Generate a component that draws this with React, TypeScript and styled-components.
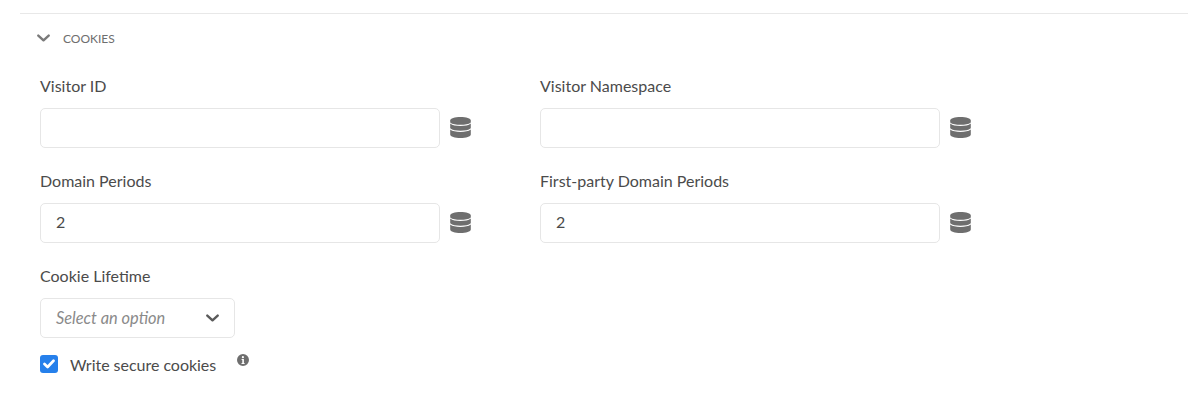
import React from 'react';
import styled, { createGlobalStyle } from 'styled-components';

const GlobalStyle = createGlobalStyle`
  html, body {
    margin: 0;
    padding: 0;
    background: #fff;
    font-family: Lato, "Open Sans", sans-serif;
  }
`;

const Page = styled.div`
  width: 1188px;
  height: 400px;
  padding: 13px 0 0 20px;
  box-sizing: border-box;
  overflow: hidden;
`;

const Section = styled.section`
  border-top: 1px solid #e8e8e8;
`;

const SectionHeader = styled.div`
  display: flex;
  align-items: center;
  height: 48px;
  padding-left: 17px;
  gap: 13px;
  color: #6e6e6e;
  font-size: 12px;
  text-transform: uppercase;
`;

const Body = styled.div`
  padding: 14px 0 0 20px;
  display: flex;
  flex-direction: column;
  gap: 23px;
`;

const Grid = styled.div`
  display: grid;
  grid-template-columns: 500px 500px;
  row-gap: 23px;
`;

const Field = styled.div`
  display: flex;
  flex-direction: column;
`;

const Label = styled.label`
  height: 32px;
  line-height: 20px;
  font-size: 16px;
  color: #4b4b4b;
`;

const InputRow = styled.div`
  display: flex;
  align-items: center;
  gap: 10px;
`;

const Input = styled.input`
  width: 400px;
  height: 40px;
  box-sizing: border-box;
  padding: 0 15px 3px;
  border: 1px solid #e6e6e6;
  border-radius: 5px;
  background: #fff;
  font: 16px Lato, "Open Sans", sans-serif;
  color: #4b4b4b;
  outline: none;
`;

const DataIcon = styled.svg`
  width: 21px;
  height: 21px;
  flex: none;
  margin-top: -1px;
  fill: #6e6e6e;
`;

const SelectBox = styled.div`
  display: flex;
  align-items: center;
  justify-content: space-between;
  width: 195px;
  height: 40px;
  box-sizing: border-box;
  padding: 0 15px;
  border: 1px solid #e6e6e6;
  border-radius: 5px;
  font-size: 16.4px;
  font-style: italic;
  color: #8a8a8a;
`;

const Placeholder = styled.span`
  margin-top: -2px;
`;

const LifetimeBlock = styled.div`
  display: flex;
  flex-direction: column;
  gap: 16px;
`;

const CheckRow = styled.div`
  display: flex;
  align-items: center;
  height: 20px;
`;

const CheckBox = styled.span`
  display: flex;
  align-items: center;
  justify-content: center;
  width: 18px;
  height: 18px;
  margin-top: -1px;
  border-radius: 3px;
  background: #2680eb;
`;

const CheckLabel = styled.span`
  margin-left: 12px;
  font-size: 16px;
  letter-spacing: -0.03px;
  color: #4b4b4b;
`;

const InfoIcon = styled.svg`
  width: 12px;
  height: 12px;
  margin: -8px 0 0 21px;
  fill: #6e6e6e;
`;

const Chevron = ({ size, color }: { size: number; color: string }) => (
  <svg width={size} height={size * 0.62} viewBox="0 0 13 8" fill="none">
    <path d="M1.3 1.5 L6.5 6.3 L11.7 1.5" stroke={color} strokeWidth="2.4" strokeLinecap="round" strokeLinejoin="round" />
  </svg>
);

const Database = () => (
  <DataIcon viewBox="0 0 21 21">
    <path d="M0.2 3.4 C0.2 1.5 4.8 0 10.5 0 C16.2 0 20.8 1.5 20.8 3.4 V5.4 C18.6 7.2 15 7.8 10.5 7.8 C6 7.8 2.4 7.2 0.2 5.4 Z" />
    <path d="M0.2 6.6 C2.4 8.4 6 9 10.5 9 C15 9 18.6 8.4 20.8 6.6 V11.2 C18.6 13 15 13.7 10.5 13.7 C6 13.7 2.4 13 0.2 11.2 Z" />
    <path d="M0.2 12.5 C2.4 14.3 6 14.9 10.5 14.9 C15 14.9 18.6 14.3 20.8 12.5 V17.4 C20.8 19.4 16 21 10.5 21 C5 21 0.2 19.4 0.2 17.4 Z" />
  </DataIcon>
);

const fields = [
  { label: 'Visitor ID', value: '' },
  { label: 'Visitor Namespace', value: '' },
  { label: 'Domain Periods', value: '2' },
  { label: 'First-party Domain Periods', value: '2' },
];

export default function App() {
  return (
    <Page>
      <GlobalStyle />
      <Section>
        <SectionHeader>
          <Chevron size={13} color="#7a7a7a" />
          <span>Cookies</span>
        </SectionHeader>
        <Body>
          <Grid>
            {fields.map((f) => (
              <Field key={f.label}>
                <Label>{f.label}</Label>
                <InputRow>
                  <Input defaultValue={f.value} />
                  <Database />
                </InputRow>
              </Field>
            ))}
          </Grid>
          <LifetimeBlock>
            <Field>
              <Label>Cookie Lifetime</Label>
              <SelectBox>
                <Placeholder>Select an option</Placeholder>
                <Chevron size={13} color="#5a5a5a" />
              </SelectBox>
            </Field>
            <CheckRow>
              <CheckBox>
                <svg width="12" height="10" viewBox="0 0 12 10" fill="none">
                  <path d="M1.5 5 L4.6 8 L10.5 1.8" stroke="#fff" strokeWidth="2.7" strokeLinecap="round" strokeLinejoin="round" />
                </svg>
              </CheckBox>
              <CheckLabel>Write secure cookies</CheckLabel>
              <InfoIcon viewBox="0 0 12 12">
                <path fillRule="evenodd" d="M6 0a6 6 0 1 0 0 12A6 6 0 0 0 6 0Zm-.1 2.1a1.1 1.1 0 1 1 0 2.2 1.1 1.1 0 0 1 0-2.2ZM4.6 5h2.3v3.9h.7V10H4.5V8.9h.8V6.1h-.7V5Z" />
              </InfoIcon>
            </CheckRow>
          </LifetimeBlock>
        </Body>
      </Section>
    </Page>
  );
}
